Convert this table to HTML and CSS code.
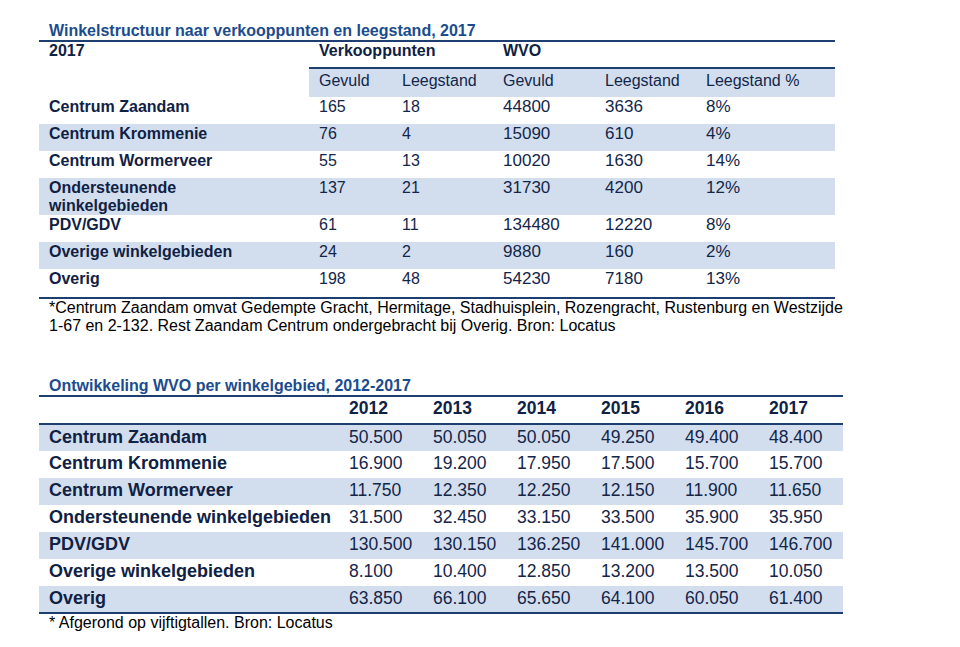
FILE: index.html
```html
<!DOCTYPE html>
<html lang="nl">
<head>
<meta charset="utf-8">
<title>Winkelstructuur</title>
<link rel="stylesheet" href="styles.css">
</head>
<body>
<main class="page">
  <section class="block block-first">
    <h2 class="caption">Winkelstructuur naar verkooppunten en leegstand, 2017</h2>
    <table class="t1">
      <colgroup>
        <col class="c-label"><col class="c-a"><col class="c-b"><col class="c-c"><col class="c-d"><col class="c-e">
      </colgroup>
      <thead>
        <tr class="h1">
          <th>2017</th>
          <th colspan="2">Verkooppunten</th>
          <th colspan="3">WVO</th>
        </tr>
        <tr class="h2">
          <th class="blank"></th>
          <th>Gevuld</th><th>Leegstand</th><th>Gevuld</th><th>Leegstand</th><th>Leegstand %</th>
        </tr>
      </thead>
      <tbody>
        <tr><th>Centrum Zaandam</th><td>165</td><td>18</td><td class="w">44800</td><td class="w">3636</td><td class="w">8%</td></tr>
        <tr class="alt"><th>Centrum Krommenie</th><td>76</td><td>4</td><td class="w">15090</td><td class="w">610</td><td class="w">4%</td></tr>
        <tr><th>Centrum Wormerveer</th><td>55</td><td>13</td><td class="w">10020</td><td class="w">1630</td><td class="w">14%</td></tr>
        <tr class="alt"><th>Ondersteunende<br>winkelgebieden</th><td>137</td><td>21</td><td class="w">31730</td><td class="w">4200</td><td class="w">12%</td></tr>
        <tr><th>PDV/GDV</th><td>61</td><td>11</td><td class="w">134480</td><td class="w">12220</td><td class="w">8%</td></tr>
        <tr class="alt"><th>Overige winkelgebieden</th><td>24</td><td>2</td><td class="w">9880</td><td class="w">160</td><td class="w">2%</td></tr>
        <tr class="last"><th>Overig</th><td>198</td><td>48</td><td class="w">54230</td><td class="w">7180</td><td class="w">13%</td></tr>
      </tbody>
    </table>
    <p class="note">*Centrum Zaandam omvat Gedempte Gracht, Hermitage, Stadhuisplein, Rozengracht, Rustenburg en Westzijde<br>1-67 en 2-132. Rest Zaandam Centrum ondergebracht bij Overig. Bron: Locatus</p>
  </section>

  <section class="block block-second">
    <h2 class="caption">Ontwikkeling WVO per winkelgebied, 2012-2017</h2>
    <table class="t2">
      <colgroup>
        <col class="c2-label"><col class="c2-y"><col class="c2-y"><col class="c2-y"><col class="c2-y"><col class="c2-y"><col class="c2-y">
      </colgroup>
      <thead>
        <tr class="yh">
          <th></th><th>2012</th><th>2013</th><th>2014</th><th>2015</th><th>2016</th><th>2017</th>
        </tr>
      </thead>
      <tbody>
        <tr class="alt"><th>Centrum Zaandam</th><td>50.500</td><td>50.050</td><td>50.050</td><td>49.250</td><td>49.400</td><td>48.400</td></tr>
        <tr><th>Centrum Krommenie</th><td>16.900</td><td>19.200</td><td>17.950</td><td>17.500</td><td>15.700</td><td>15.700</td></tr>
        <tr class="alt"><th>Centrum Wormerveer</th><td>11.750</td><td>12.350</td><td>12.250</td><td>12.150</td><td>11.900</td><td>11.650</td></tr>
        <tr><th>Ondersteunende winkelgebieden</th><td>31.500</td><td>32.450</td><td>33.150</td><td>33.500</td><td>35.900</td><td>35.950</td></tr>
        <tr class="alt"><th>PDV/GDV</th><td>130.500</td><td>130.150</td><td>136.250</td><td>141.000</td><td>145.700</td><td>146.700</td></tr>
        <tr><th>Overige winkelgebieden</th><td>8.100</td><td>10.400</td><td>12.850</td><td>13.200</td><td>13.500</td><td>10.050</td></tr>
        <tr class="alt last"><th>Overig</th><td>63.850</td><td>66.100</td><td>65.650</td><td>64.100</td><td>60.050</td><td>61.400</td></tr>
      </tbody>
    </table>
    <p class="note">* Afgerond op vijftigtallen. Bron: Locatus</p>
  </section>
</main>
</body>
</html>
```

FILE: styles.css
```css
html, body {
  margin: 0;
  padding: 0;
  background: #ffffff;
}

body {
  font-family: "Liberation Sans", Arial, sans-serif;
  color: #13264a;
}

.page {
  padding: 22px 0 0 39px;
}

.block {
  display: flex;
  flex-direction: column;
}

.block-first {
  width: 796px;
}

.block-second {
  width: 804px;
  margin-top: 42px;
}

.caption {
  margin: 0;
  padding-left: 10px;
  font-size: 16px;
  line-height: 18px;
  font-weight: bold;
  color: #1b4c8e;
  border-bottom: 2px solid #1d3f6f;
}

table {
  border-collapse: collapse;
  border-spacing: 0;
  table-layout: fixed;
}

th, td {
  padding: 0 0 0 10px;
  text-align: left;
  white-space: nowrap;
}

/* ---------- table 1 ---------- */
.t1 {
  width: 796px;
  font-size: 16px;
  line-height: 18px;
}

.c-label { width: 270px; }
.c-a { width: 83px; }
.c-b { width: 101px; }
.c-c { width: 102px; }
.c-d { width: 101px; }
.c-e { width: 139px; }

.t1 th, .t1 td {
  vertical-align: top;
}

.t1 .h1 th {
  height: 26px;
  font-weight: bold;
  color: #0f2144;
  padding-top: 0;
  box-sizing: border-box;
}

.t1 .h2 th {
  height: 29px;
  padding-top: 3px;
  font-weight: normal;
  color: #13264a;
  background: #d2deed;
  border-top: 2px solid #1d3f6f;
  box-sizing: border-box;
}

.t1 .h2 th.blank {
  background: transparent;
  border-top: none;
}

.t1 tbody th,
.t1 tbody td {
  height: 27px;
  padding-top: 1px;
  box-sizing: border-box;
}

.t1 tbody th {
  font-weight: bold;
  color: #0f2144;
}

.t1 tbody td {
  font-weight: normal;
}

.t1 td.w {
  font-size: 17px;
}

.t1 tr.alt th,
.t1 tr.alt td {
  background: #d2deed;
}

.t1 tr.last th,
.t1 tr.last td {
  border-bottom: 2px solid #1d3f6f;
  height: 29px;
}

/* ---------- table 2 ---------- */
.t2 {
  width: 804px;
  font-size: 17.5px;
  line-height: 20px;
}

.c2-label { width: 300px; }
.c2-y { width: 84px; }

.t2 th, .t2 td {
  vertical-align: middle;
  box-sizing: border-box;
}

.t2 .yh th {
  height: 27px;
  padding-bottom: 5px;
  font-weight: bold;
  color: #0f2144;
  border-bottom: 2px solid #1d3f6f;
}

.t2 tbody th,
.t2 tbody td {
  height: 27px;
  padding-bottom: 3px;
}

.t2 tbody th {
  font-size: 18px;
  font-weight: bold;
  color: #0f2144;
}

.t2 tr.alt th,
.t2 tr.alt td {
  background: #d2deed;
}

.t2 tr.last th,
.t2 tr.last td {
  border-bottom: 2px solid #1d3f6f;
  height: 27px;
}

/* ---------- notes ---------- */
.note {
  margin: 0;
  padding-left: 10px;
  font-size: 16px;
  line-height: 18px;
  color: #000000;
  white-space: nowrap;
}
```
